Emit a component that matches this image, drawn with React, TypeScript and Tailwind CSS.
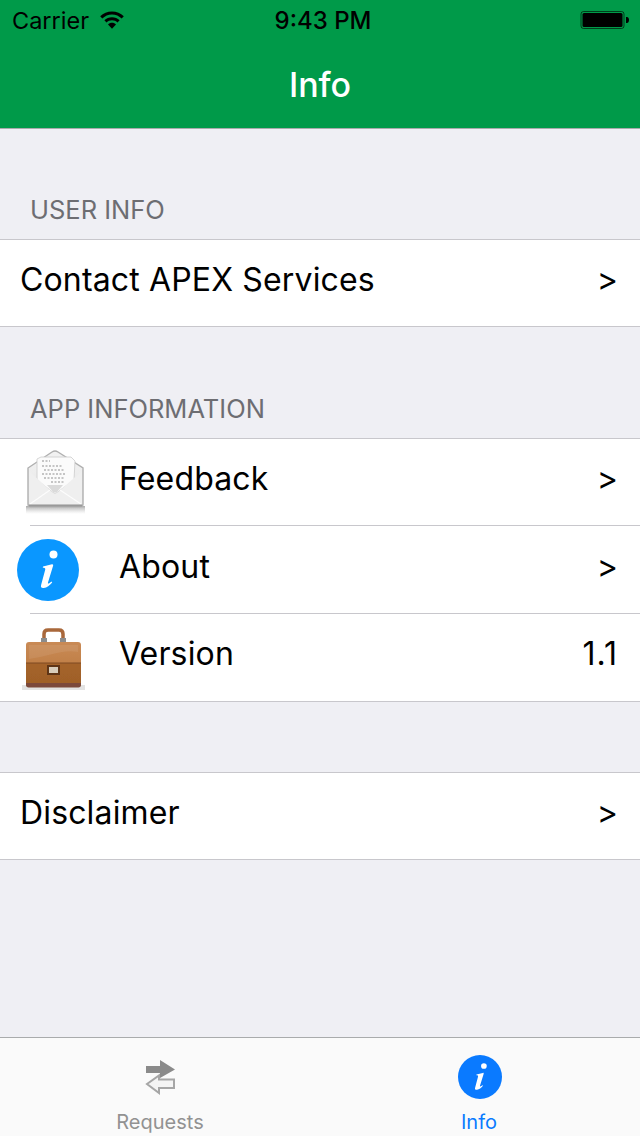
const font = "font-['Inter','Noto_Sans',sans-serif]";

const WifiIcon = () => (
  <svg width="26" height="20" viewBox="0 0 26 20" fill="#000">
    <path d="M13 1.5C8.4 1.5 4.300 3.300 1.200 6.300l2.100 2.200C5.800 6 9.200 4.400 13 4.400s7.200 1.600 9.700 4.100l2.100-2.200C21.700 3.300 17.600 1.500 13 1.500z" />
    <path d="M13 7.200c-3 0-5.600 1.200-7.600 3.100l2.100 2.200c1.400-1.400 3.400-2.300 5.500-2.300s4.100.9 5.500 2.300l2.100-2.200c-2-1.900-4.600-3.100-7.600-3.100z" />
    <path d="M13 12.800c-1.600 0-3 .6-4 1.600l4 4.300 4-4.300c-1-1-2.400-1.600-4-1.600z" />
  </svg>
);

const BatteryIcon = () => (
  <svg width="50" height="20" viewBox="0 0 50 20">
    <rect x="1" y="1.500" width="43" height="17" rx="2.500" fill="none" stroke="#000" strokeOpacity="0.6" />
    <rect x="2.500" y="3" width="40" height="14" rx="1.500" fill="#000" />
    <path d="M46 7h1c1 0 2 1 2 3s-1 3-2 3h-1z" fill="#000" />
  </svg>
);

const EnvelopeIcon = () => (
  <svg width="64" height="68" viewBox="0 0 64 68">
    <defs>
      <linearGradient id="env" x1="0" y1="0" x2="0" y2="1">
        <stop offset="0" stopColor="#f2f2f2" />
        <stop offset="1" stopColor="#e6e6e6" />
      </linearGradient>
      <linearGradient id="envShadow" x1="0" y1="0" x2="0" y2="1">
        <stop offset="0" stopColor="#555" stopOpacity="0.5" />
        <stop offset="1" stopColor="#aaa" stopOpacity="0" />
      </linearGradient>
      <filter id="soft">
        <feGaussianBlur stdDeviation="0.6" />
      </filter>
    </defs>
    <rect x="3" y="57" width="59" height="8" fill="url(#envShadow)" filter="url(#soft)" />
    <g filter="url(#soft)">
      <path d="M5 19 29 3c2-1.300 4-1.300 6 0l25 16v36c0 1.500-1 2.500-2.500 2.500h-50C6 57.500 5 56.500 5 55z" fill="url(#env)" stroke="#b0b0b0" strokeWidth="1.400" />
      <path d="M14 10l4-2h30l4 4-1 19-19 14-18-14z" fill="#fbfbfb" stroke="#cccccc" strokeWidth="0.800" />
      <g stroke="#8f8f8f" strokeWidth="1.200" strokeDasharray="2 1.500">
        <path d="M19 12h8M19 17h20M21 21h20M19 25h24M21 29h20M28 33h14" />
      </g>
      <path d="M6 22 30 44c1.500 1 2.500 1 4 0l25-22v33H6z" fill="#efefef" />
      <path d="M24 36h16l-6 7c-1.500 1-2.500 1-4 0z" fill="#dadada" />
      <path d="M7 55 27 41M58 55 37 41" stroke="#fcfcfc" strokeWidth="1.200" />
      <path d="M6 56.500h53" stroke="#999" strokeWidth="1.800" />
    </g>
  </svg>
);

const InfoCircle = ({ size, color }: { size: number; color: string }) => (
  <svg width={size} height={size} viewBox="0 0 62 62">
    <circle cx="31" cy="31" r="31" fill={color} />
    <circle cx="36.500" cy="15.500" r="4" fill="#fff" />
    <path d="M26 27.500l9-2.300c1-.2 1.400.6 1.100 1.600L31 43.500c-.3 1 .4 1.300 1.200.7l2.300-1.700.7.900c-2.500 3-5.300 5-8.400 5.600-2.400.3-3.300-.9-2.700-3l4.100-15.300c.4-1.400-.5-2-2.400-2z" fill="#fff" />
  </svg>
);

const BriefcaseIcon = () => (
  <svg width="66" height="66" viewBox="0 0 66 66">
    <defs>
      <linearGradient id="caseTop" x1="0" y1="0" x2="0" y2="1">
        <stop offset="0" stopColor="#c98a55" />
        <stop offset="1" stopColor="#b8763c" />
      </linearGradient>
      <linearGradient id="caseBottom" x1="0" y1="0" x2="0" y2="1">
        <stop offset="0" stopColor="#a5642a" />
        <stop offset="1" stopColor="#9f6028" />
      </linearGradient>
      <filter id="soft2">
        <feGaussianBlur stdDeviation="0.5" />
      </filter>
    </defs>
    <rect x="2" y="60" width="63" height="5" fill="#d8d8d8" opacity="0.7" filter="url(#soft2)" />
    <g filter="url(#soft2)">
      <path d="M24 16V9c0-2.500 1.500-4 4-4h11c2.500 0 4 1.500 4 4v7" fill="none" stroke="#a9683a" strokeWidth="3.500" />
      <rect x="21" y="13" width="6" height="6" fill="#8c8c8c" />
      <rect x="40" y="13" width="6" height="6" fill="#8c8c8c" />
      <rect x="6" y="17" width="55" height="45" rx="3" fill="url(#caseTop)" />
      <rect x="6" y="38" width="55" height="21" fill="url(#caseBottom)" />
      <path d="M6 58h55v2c0 1.500-1 2.500-2.500 2.500h-50C7 62.500 6 61.500 6 60z" fill="#7c4a3a" />
      <path d="M9 20h49v7C42 24 27 32 9 34z" fill="#fff" opacity="0.08" />
      <rect x="6" y="37.500" width="55" height="1" fill="#7e4a22" />
      <rect x="28" y="41" width="11" height="8" fill="#d8cdbb" stroke="#5e3516" strokeWidth="2" />
    </g>
  </svg>
);

const TransferIcon = () => (
  <svg width="32" height="36" viewBox="0 0 32 36">
    <defs>
      <filter id="soft3">
        <feGaussianBlur stdDeviation="0.5" />
      </filter>
    </defs>
    <g filter="url(#soft3)">
      <path d="M2 7h14V1l15 9.500L16 19v-5H2z" fill="#8a8a8a" />
      <path d="M30 20.500H15v-4L3 25l12 9v-5h15z" fill="#f4f4f4" stroke="#a6a6a6" strokeWidth="2" />
    </g>
  </svg>
);

const Row = ({ icon, label, value, divider, height }: { icon?: React.ReactNode; label: string; value?: string; divider?: boolean; height: string }) => (
  <div className={`relative flex items-center bg-white pr-[22px] ${height}`}>
    {icon && <div className="flex w-[120px] shrink-0 items-center justify-start">{icon}</div>}
    <span className={`mb-[7px] text-[32px] tracking-[0.15px] text-black ${icon ? "-ml-px" : "pl-[20px]"}`}>{label}</span>
    <span className={`mb-[7px] ml-auto text-[32px] text-black ${value ? "tracking-[1px]" : ""}`}>{value ?? ">"}</span>
    {divider && <div className="absolute right-0 bottom-0 left-[30px] h-px bg-[#c8c7cc]" />}
  </div>
);

const SectionLabel = ({ text, height }: { text: string; height: string }) => (
  <div className={`flex items-end pb-[13px] pl-[30px] text-[25.5px] leading-[32px] text-[#6d6d72] ${height}`}>{text}</div>
);

export default function App() {
  return (
    <div className={`flex h-[1136px] w-[640px] flex-col overflow-hidden bg-[#efeff4] ${font}`}>
      <header className="h-[129px] shrink-0 border-b border-[#a9abac] bg-[#009a49]">
        <div className="relative flex h-[42px] items-center px-[12px] text-[23.5px] text-black">
          <span>Carrier</span>
          <span className="-mt-[2px] ml-[10px]">
            <WifiIcon />
          </span>
          <span className="absolute left-[6px] right-0 text-center text-[24px] font-medium">9:43 PM</span>
          <span className="-mt-[2px] ml-auto mr-[-2px]">
            <BatteryIcon />
          </span>
        </div>
        <div className="pt-[21px] text-center text-[34px] font-medium leading-[44px] text-white">Info</div>
      </header>

      <SectionLabel text="USER INFO" height="h-[110px]" />
      <div className="border-y border-[#c8c7cc]">
        <Row label="Contact APEX Services" height="h-[86px]" />
      </div>

      <SectionLabel text="APP INFORMATION" height="h-[111px]" />
      <div className="border-y border-[#c8c7cc]">
        <Row icon={<span className="pl-[23px]"><EnvelopeIcon /></span>} label="Feedback" divider height="h-[87px]" />
        <Row icon={<span className="pl-[17px]"><InfoCircle size={62} color="#0a97ff" /></span>} label="About" divider height="h-[88px]" />
        <Row icon={<span className="pl-[20px]"><BriefcaseIcon /></span>} label="Version" value="1.1" height="h-[87px]" />
      </div>

      <div className="h-[70px]" />
      <div className="border-y border-[#c8c7cc]">
        <Row label="Disclaimer" height="h-[86px]" />
      </div>

      <div className="flex-1" />
      <nav className="flex h-[99px] shrink-0 border-t border-[#a9abac] bg-[#fafafa] pt-[17px]">
        <div className="flex w-[320px] flex-col items-center">
          <div className="flex h-[44px] items-center">
            <TransferIcon />
          </div>
          <span className="mt-[11px] text-[20px] leading-[24px] text-[#929292]">Requests</span>
        </div>
        <div className="flex w-[320px] flex-col items-center">
          <div className="flex h-[44px] items-center">
            <InfoCircle size={44} color="#0a7aff" />
          </div>
          <span className="-ml-[2px] mt-[11px] text-[20px] leading-[24px] text-[#0a7aff]">Info</span>
        </div>
      </nav>
    </div>
  );
}
